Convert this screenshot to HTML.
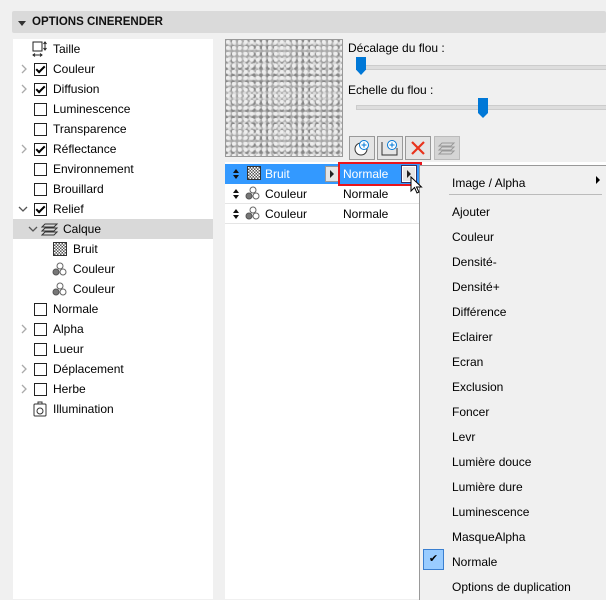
<!DOCTYPE html>
<html><head><meta charset="utf-8"><style>
body{margin:0;width:606px;height:599px;background:#f0f0f0;font-family:"Liberation Sans",sans-serif;font-size:12px;color:#000;position:relative;overflow:hidden}
.a{position:absolute}
.hdr{left:12px;top:11px;width:594px;height:22px;background:#dadada;border-radius:2px}
.hdr span{position:absolute;left:20px;top:5px;font-weight:bold;font-size:11.5px;color:#111}
.tree{left:13px;top:39px;width:200px;height:560px;background:#fff}
.row{position:absolute;left:0;width:200px;height:20px;line-height:20px}
.cb{position:absolute;left:21px;top:4px;width:11px;height:11px;border:1px solid #222;background:#fff}
.cb.c::after{content:"";position:absolute;left:3px;top:0px;width:3px;height:7px;border:solid #000;border-width:0 2px 2px 0;transform:rotate(45deg)}
.lbl{position:absolute;left:40px}
.mi{position:absolute;left:32px}
</style></head><body>
<svg width="0" height="0" style="position:absolute"><defs>
<symbol id="cr" viewBox="0 0 8 10"><path d="M2 1l4 4-4 4" fill="none" stroke="#aaa" stroke-width="1.3"/></symbol>
<symbol id="cd" viewBox="0 0 10 8"><path d="M1 2l4 4 4-4" fill="none" stroke="#555" stroke-width="1.3"/></symbol>
<symbol id="ud" viewBox="0 0 8 12"><path d="M1 5l3-4 3 4zM1 7l3 4 3-4z" fill="#111"/></symbol>
<symbol id="col" viewBox="0 0 16 15"><circle cx="8" cy="4" r="3" fill="#fff" stroke="#666"/><circle cx="4" cy="10" r="3" fill="#777" stroke="#555"/><circle cx="11" cy="10" r="3" fill="#fff" stroke="#666"/></symbol>
</defs></svg>
<div class="a hdr"><div class="a" style="left:6px;top:10px;width:0;height:0;border-left:4px solid transparent;border-right:4px solid transparent;border-top:5px solid #333"></div><span>OPTIONS CINERENDER</span></div>
<div class="a tree">
 <div class="row" style="top:0"><svg class="a" style="left:19px;top:2px" width="16" height="16"><rect x="1" y="1" width="9" height="9" fill="none" stroke="#222"/><path d="M13 1v8M11.5 3l1.5-2 1.5 2M11.5 7l1.5 2 1.5-2M1 14h9M3 12.5l-2 1.5 2 1.5M8 12.5l2 1.5-2 1.5" stroke="#222" fill="none"/></svg><span class="lbl">Taille</span></div>
 <div class="row" style="top:20px"><svg class="a" style="left:7px;top:5px" width="8" height="10"><use href="#cr"/></svg><div class="cb c"></div><span class="lbl">Couleur</span></div>
 <div class="row" style="top:40px"><svg class="a" style="left:7px;top:5px" width="8" height="10"><use href="#cr"/></svg><div class="cb c"></div><span class="lbl">Diffusion</span></div>
 <div class="row" style="top:60px"><div class="cb"></div><span class="lbl">Luminescence</span></div>
 <div class="row" style="top:80px"><div class="cb"></div><span class="lbl">Transparence</span></div>
 <div class="row" style="top:100px"><svg class="a" style="left:7px;top:5px" width="8" height="10"><use href="#cr"/></svg><div class="cb c"></div><span class="lbl">Réflectance</span></div>
 <div class="row" style="top:120px"><div class="cb"></div><span class="lbl">Environnement</span></div>
 <div class="row" style="top:140px"><div class="cb"></div><span class="lbl">Brouillard</span></div>
 <div class="row" style="top:160px"><svg class="a" style="left:5px;top:6px" width="10" height="8"><use href="#cd"/></svg><div class="cb c"></div><span class="lbl">Relief</span></div>
 <div class="row" style="top:180px;background:#d9d9d9"><svg class="a" style="left:15px;top:6px" width="10" height="8"><use href="#cd"/></svg><svg class="a" style="left:28px;top:3px" width="18" height="14"><path d="M4 2h12l-3 3H1zM4 6h12l-3 3H1zM4 10h12l-3 3H1z" fill="none" stroke="#333"/></svg><span class="lbl" style="left:50px">Calque</span></div>
 <div class="row" style="top:200px"><div class="a" style="left:40px;top:3px;width:12px;height:12px;border:1px solid #333;background:repeating-conic-gradient(#555 0 25%,#fff 0 50%) 0 0/3px 3px"></div><span class="lbl" style="left:60px">Bruit</span></div>
 <div class="row" style="top:220px"><svg class="a" style="left:39px;top:3px" width="16" height="15"><use href="#col"/></svg><span class="lbl" style="left:60px">Couleur</span></div>
 <div class="row" style="top:240px"><svg class="a" style="left:39px;top:3px" width="16" height="15"><use href="#col"/></svg><span class="lbl" style="left:60px">Couleur</span></div>
 <div class="row" style="top:260px"><div class="cb"></div><span class="lbl">Normale</span></div>
 <div class="row" style="top:280px"><svg class="a" style="left:7px;top:5px" width="8" height="10"><use href="#cr"/></svg><div class="cb"></div><span class="lbl">Alpha</span></div>
 <div class="row" style="top:300px"><div class="cb"></div><span class="lbl">Lueur</span></div>
 <div class="row" style="top:320px"><svg class="a" style="left:7px;top:5px" width="8" height="10"><use href="#cr"/></svg><div class="cb"></div><span class="lbl">Déplacement</span></div>
 <div class="row" style="top:340px"><svg class="a" style="left:7px;top:5px" width="8" height="10"><use href="#cr"/></svg><div class="cb"></div><span class="lbl">Herbe</span></div>
 <div class="row" style="top:360px"><svg class="a" style="left:20px;top:2px" width="14" height="16"><rect x="1" y="3" width="12" height="12" rx="1" fill="none" stroke="#333"/><circle cx="7" cy="10" r="3" fill="none" stroke="#333"/><path d="M5 3V1h4v2" fill="none" stroke="#333"/></svg><span class="lbl">Illumination</span></div>
</div>
<div class="a" style="left:225px;top:39px;width:118px;height:118px;border:1px solid #999;box-sizing:border-box;background:radial-gradient(circle at 30% 30%,#eee 0 25%,transparent 45%) 0 0/6px 6px,radial-gradient(circle at 70% 60%,#888 0 18%,transparent 40%) 2px 3px/7px 7px,radial-gradient(circle,#ddd 0 30%,#aaa 70%) 1px 1px/5px 5px,#c4c4c4"></div>
<div class="a" style="left:348px;top:41px">Décalage du flou :</div>
<div class="a" style="left:356px;top:65px;width:250px;height:3px;background:#ddd;border:1px solid #ccc"></div>
<div class="a" style="left:356px;top:57px;width:10px;height:18px;background:#0078d7;clip-path:polygon(0 0,100% 0,100% 70%,50% 100%,0 70%)"></div>
<div class="a" style="left:348px;top:83px">Echelle du flou :</div>
<div class="a" style="left:356px;top:105px;width:250px;height:3px;background:#ddd;border:1px solid #ccc"></div>
<div class="a" style="left:478px;top:98px;width:10px;height:20px;background:#0078d7;clip-path:polygon(0 0,100% 0,100% 75%,50% 100%,0 75%)"></div>
<div class="a" style="left:349px;top:136px;width:24px;height:22px;border:1px solid #999;background:#e5e5e5"><svg width="24" height="22"><circle cx="11" cy="12" r="6" fill="#fff" stroke="#333"/><circle cx="14" cy="8" r="4.5" fill="#fff" stroke="#0078d7"/><path d="M14 5.5v5M11.5 8h5" stroke="#0078d7"/></svg></div>
<div class="a" style="left:377px;top:136px;width:24px;height:22px;border:1px solid #999;background:#e5e5e5"><svg width="24" height="22"><path d="M4 5v13h15V11" fill="none" stroke="#333"/><circle cx="14" cy="8" r="4.5" fill="#fff" stroke="#0078d7"/><path d="M14 5.5v5M11.5 8h5" stroke="#0078d7"/></svg></div>
<div class="a" style="left:405px;top:136px;width:24px;height:22px;border:1px solid #999;background:#e5e5e5"><svg width="24" height="22"><path d="M6 5l12 12M18 5L6 17" stroke="#e8331c" stroke-width="2.2"/></svg></div>
<div class="a" style="left:434px;top:136px;width:24px;height:22px;border:1px solid #bbb;background:#d5d5d5"><svg width="24" height="22"><path d="M7 6h12l-3 3H4zM7 10h12l-3 3H4zM7 14h12l-3 3H4z" fill="none" stroke="#999"/></svg></div>
<div class="a" style="left:225px;top:162px;width:381px;height:437px;background:#fff"></div>
<div class="a" style="left:225px;top:164px;width:195px;height:20px;background:#3399ff"></div>
<div class="a" style="left:225px;top:203px;width:195px;height:1px;background:#e5e5e5"></div>
<div class="a" style="left:225px;top:223px;width:195px;height:1px;background:#e5e5e5"></div>
<svg class="a" style="left:232px;top:168px" width="8" height="12"><use href="#ud"/></svg>
<svg class="a" style="left:232px;top:188px" width="8" height="12"><use href="#ud"/></svg>
<svg class="a" style="left:232px;top:208px" width="8" height="12"><use href="#ud"/></svg>
<div class="a" style="left:247px;top:166px;width:12px;height:12px;border:1px solid #333;background:repeating-conic-gradient(#555 0 25%,#fff 0 50%) 0 0/3px 3px"></div>
<div class="a" style="left:265px;top:167px;color:#fff">Bruit</div>
<div class="a" style="left:325px;top:166px;width:12px;height:14px;background:#e5e5e5;border:1px solid #999"><div class="a" style="left:4px;top:3px;border-left:4px solid #222;border-top:4px solid transparent;border-bottom:4px solid transparent"></div></div>
<svg class="a" style="left:245px;top:186px" width="16" height="15"><use href="#col"/></svg>
<svg class="a" style="left:245px;top:206px" width="16" height="15"><use href="#col"/></svg>
<div class="a" style="left:265px;top:187px">Couleur</div>
<div class="a" style="left:265px;top:207px">Couleur</div>
<div class="a" style="left:343px;top:187px">Normale</div>
<div class="a" style="left:343px;top:207px">Normale</div>
<div class="a" style="left:338px;top:162px;width:80px;height:20px;border:2px solid #e8141c"></div>
<div class="a" style="left:343px;top:167px;color:#fff">Normale</div>
<div class="a" style="left:402px;top:166px;width:12px;height:14px;background:#e5e5e5;border:1px solid #fff;outline:1px solid #336"><div class="a" style="left:4px;top:3px;border-left:4px solid #222;border-top:4px solid transparent;border-bottom:4px solid transparent"></div></div>
<div class="a" style="left:419px;top:165px;width:187px;height:434px;background:#f0f0f0;border-left:1px solid #999;border-top:1px solid #999">
 <div class="mi" style="top:10px">Image / Alpha</div>
 <div class="a" style="left:176px;top:10px;border-left:4px solid #000;border-top:4px solid transparent;border-bottom:4px solid transparent"></div>
 <div class="a" style="left:29px;top:28px;width:153px;height:1px;background:#bbb"></div>
 <div class="mi" style="top:39px">Ajouter</div>
 <div class="mi" style="top:64px">Couleur</div>
 <div class="mi" style="top:89px">Densité-</div>
 <div class="mi" style="top:114px">Densité+</div>
 <div class="mi" style="top:139px">Différence</div>
 <div class="mi" style="top:164px">Eclairer</div>
 <div class="mi" style="top:189px">Ecran</div>
 <div class="mi" style="top:214px">Exclusion</div>
 <div class="mi" style="top:239px">Foncer</div>
 <div class="mi" style="top:264px">Levr</div>
 <div class="mi" style="top:289px">Lumière douce</div>
 <div class="mi" style="top:314px">Lumière dure</div>
 <div class="mi" style="top:339px">Luminescence</div>
 <div class="mi" style="top:364px">MasqueAlpha</div>
 <div class="a" style="left:3px;top:383px;width:21px;height:21px;background:#99ccff;border:1px solid #3a7fd0;box-sizing:border-box;font-size:11px;text-align:center;line-height:19px">✔</div>
 <div class="mi" style="top:389px">Normale</div>
 <div class="mi" style="top:414px">Options de duplication</div>
</div>
<svg class="a" style="left:410px;top:176px" width="14" height="20"><path d="M1 1v14l3.5-3.5 2.5 5.5 2-1-2.5-5h5z" fill="#fff" stroke="#000"/></svg>
</body></html>
